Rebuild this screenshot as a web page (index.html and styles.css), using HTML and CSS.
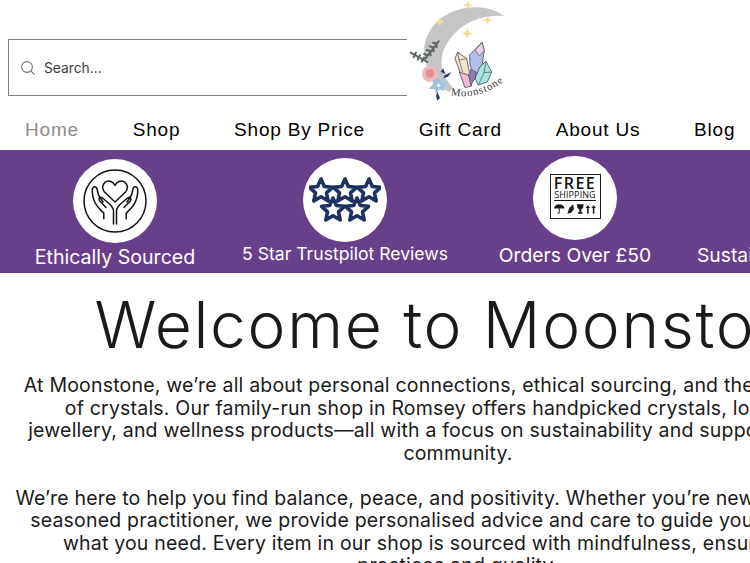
FILE: index.html
```html
<!DOCTYPE html>
<html lang="en">
<head>
<meta charset="utf-8">
<title>Moonstone</title>
<link rel="stylesheet" href="styles.css">
</head>
<body>
<div class="page">
  <header class="top">
    <form class="search">
      <svg class="search-icon" viewBox="0 0 16 16" width="16" height="16"><circle cx="7" cy="7" r="5.4" fill="none" stroke="#777" stroke-width="1.1"/><path d="M11 11l3.400 3.600" stroke="#777" stroke-width="1.100" fill="none"/></svg>
      <span class="search-text">Search...</span>
    </form>
    <svg class="logo" viewBox="21 0 339 315" width="113" height="105">
      <path d="M312 48C270 15 190 10 130 50 85 80 65 130 75 180 85 225 115 262 150 277L158 262C130 235 118 195 128 160 138 125 165 95 190 78 220 58 265 45 312 48Z" fill="#c5c5c5"/>
      <path d="M120 50l4 11 11 4-11 4-4 11-4-11-11-4 11-4ZM204 1l4 11 11 4-11 4-4 11-4-11-11-4 11-4ZM263 46l4 11 11 4-11 4-4 11-4-11-11-4 11-4ZM202 84l4 12 13 5-13 5-4 12-4-12-13-5 13-5Z" fill="#f6dd97"/>
      <g fill="none" stroke="#5d665f" stroke-width="6" stroke-linecap="round">
        <path d="M116 124L76 176M108 130l-9-2M99 142l-10-3M90 153l-10-3M81 165l-9-3M109 134l1 8M100 146l1 8M91 158l1 8"/>
        <path d="M32 158L82 186M44 165l-3 7M56 172l-3 7M68 179l-3 6M44 165l4-7M56 172l4-7M68 179l4-6"/>
      </g>
      <path d="M165 176l8-20 27 20 8 40-8 40-20-40Z" fill="#f3e3cc" stroke="#4c4c58" stroke-width="2.500"/>
      <path d="M173 156l4 24 11 36M177 180l23-4" fill="none" stroke="#4c4c58" stroke-width="2"/>
      <path d="M209 165l37-38 7 24-7 46-21 38-15-40Z" fill="#b4bdea" stroke="#4c4c58" stroke-width="2.500"/>
      <path d="M226 150l20-22 7 24-15 16Z" fill="#ead3e4" stroke="#4c4c58" stroke-width="2"/>
      <path d="M240 200l18-16 17 32-13 30-27 9-10-20Z" fill="#a8e4e0" stroke="#4c4c58" stroke-width="2.500"/>
      <path d="M258 184l-6 34 23-2M252 218l-17 37" fill="none" stroke="#4c4c58" stroke-width="2"/>
      <path d="M178 216l27 9 10 33-20 5Z" fill="#f2b9d2" stroke="#4c4c58" stroke-width="2.500"/>
      <path d="M212 208l17 8-4 20-13 20-4-24Z" fill="#8a7fa8" stroke="#4c4c58" stroke-width="2"/>
      <path d="M134 225l20-8-10 13-14 5ZM122 215l8-10 6 18ZM112 275l8 19-8 8-4-14Z" fill="#27406e"/>
      <circle cx="90" cy="222" r="24" fill="#efb8ba"/>
      <circle cx="90" cy="220" r="13" fill="#e28f96"/>
      <path d="M100 240l18-7 8 14 20-3-15 16 2 13-16-5-8 14-6-15-18 0 14-14Z" fill="#9fc2e2"/>
      <circle cx="116" cy="256" r="5" fill="#f6f6fb"/>
      <path id="arc" d="M152 285Q240 302 316 240" fill="none"/>
      <text class="logo-text"><textPath href="#arc">Moonstone</textPath></text>
    </svg>
  </header>
  <nav class="nav">
    <a class="nav-link is-active">Home</a>
    <a class="nav-link">Shop</a>
    <a class="nav-link">Shop By Price</a>
    <a class="nav-link">Gift Card</a>
    <a class="nav-link">About Us</a>
    <a class="nav-link">Blog</a>
  </nav>
  <section class="band">
    <div class="perk perk-one">
      <div class="badge">
        <svg viewBox="0 0 64 64" width="64" height="64" fill="none" stroke="#111" stroke-width="1.500" stroke-linejoin="round" stroke-linecap="round">
          <circle cx="32" cy="32" r="31"/>
          <path d="M32 33L21.500 23C17 17.500 22 10 28 12.500c2 .8 3.200 2.500 4 4 .8-1.500 2-3.200 4-4 6-2.500 11 5 6.500 10.500Z"/>
          <path d="M30.500 55V42c0-3-2-5-4-7l-7-6c-2.500-2-4.500 .5-2.800 3l6.300 6.500M20 33l-4.500-7-1.500-6c-.5-3-3.500-3-4.500-.8-.5 3 .3 9 1.800 13 2 5 6 8.500 9.500 12v5.500"/>
          <path d="M33.500 55V42c0-3 2-5 4-7l7-6c2.500-2 4.500 .5 2.800 3l-6.300 6.500M44 33l4.500-7 1.500-6c.5-3 3.500-3 4.500-.8 .5 3-.3 9-1.800 13-2 5-6 8.500-9.500 12v5.500"/>
        </svg>
      </div>
      <p class="perk-label label-one">Ethically Sourced</p>
    </div>
    <div class="perk perk-two">
      <div class="badge">
        <svg viewBox="0 0 72 46" width="72" height="46" fill="#fff" stroke="#1b3260" stroke-width="3.600" stroke-linejoin="round">
          <path d="M12 2l3.400 7.500 8.100 .9-6 5.500 1.700 8-7.200-4.100-7.200 4.100 1.700-8-6-5.500 8.100-.9Z"/>
          <path d="M60 2l3.400 7.500 8.100 .9-6 5.500 1.700 8-7.200-4.100-7.200 4.100 1.700-8-6-5.500 8.100-.9Z"/>
          <path d="M36 2l3.400 7.500 8.100 .9-6 5.500 1.700 8-7.200-4.100-7.200 4.100 1.700-8-6-5.500 8.100-.9Z"/>
          <path d="M24 21l3.400 7.500 8.100 .9-6 5.500 1.700 8-7.200-4.100-7.200 4.100 1.700-8-6-5.500 8.100-.9Z"/>
          <path d="M48 21l3.400 7.500 8.100 .9-6 5.500 1.700 8-7.200-4.100-7.200 4.100 1.700-8-6-5.500 8.100-.9Z"/>
        </svg>
      </div>
      <p class="perk-label label-two">5 Star Trustpilot Reviews</p>
    </div>
    <div class="perk perk-three">
      <div class="badge">
        <div class="ship">
          <span class="ship-free">FREE</span>
          <span class="ship-word">SHIPPING</span>
          <svg class="ship-icons" viewBox="0 0 44 10" width="44" height="10" fill="#1a1a1a">
            <path d="M0 4.500a5.500 4.500 0 0 1 11 0ZM5 4.500h1V9q0 1-1.500 1L3 9h1.500q.5 0 .5-.5Z"/>
            <path d="M14 10l2-6 4-4 1 5-3 4Z"/>
            <path d="M24 0h7l-.5 4-2 1.500V8.500h1.500V10h-5V8.500h1.500v-3l-2-1.500Z"/>
            <path d="M35.500 1l2.500 3h-1.700v6h-1.600V4H33ZM41.500 1L44 4h-1.700v6h-1.600V4H39Z"/>
          </svg>
        </div>
      </div>
      <p class="perk-label label-three">Orders Over £50</p>
    </div>
    <div class="perk perk-four">
      <div class="badge badge-off"></div>
      <p class="perk-label label-three">Sustainable Practices</p>
    </div>
  </section>
  <main class="intro">
    <h1 class="title">Welcome to Moonstone</h1>
    <p class="copy">At Moonstone, we’re all about personal connections, ethical sourcing, and the healing power<br>of crystals. Our family-run shop in Romsey offers handpicked crystals, locally made<br>jewellery, and wellness products—all with a focus on sustainability and supporting our local<br>community.</p>
    <p class="copy">We’re here to help you find balance, peace, and positivity. Whether you’re new to crystals or a<br>seasoned practitioner, we provide personalised advice and care to guide you in finding just<br>what you need. Every item in our shop is sourced with mindfulness, ensuring ethical<br>practices and quality.</p>
  </main>
</div>
</body>
</html>
```
FILE: styles.css
```css
html, body {
  margin: 0;
  padding: 0;
  height: 563px;
  overflow: hidden;
  background: #fff;
}
.page {
  width: 1000px;
  font-family: Inter, "Open Sans", sans-serif;
  color: #1a1a1a;
}
.top {
  display: flex;
  align-items: flex-start;
  height: 111px;
  padding-left: 8px;
}
.search {
  box-sizing: border-box;
  flex: none;
  width: 399px;
  height: 57px;
  margin-top: 39px;
  display: flex;
  align-items: center;
  gap: 8px;
  padding-left: 11px;
  border: 1px solid #808080;
  border-right: 0;
}
.search-text {
  font-size: 13.800px;
  color: #3b3b3b;
}
.logo { flex: none; }
.logo-text {
  font-family: "Liberation Serif", serif;
  font-size: 32px;
  fill: #333;
  letter-spacing: 3px;
}
.nav {
  box-sizing: border-box;
  display: flex;
  gap: 53.800px;
  height: 39px;
  padding: 0 0 2px 25px;
  align-items: center;
  font-family: "Liberation Sans", Arial, sans-serif;
  font-size: 19px;
  letter-spacing: .8px;
  color: #000;
}
.nav-link { white-space: nowrap; }
.is-active { color: #8d8d8d; }
.band {
  height: 123px;
  background: #68408a;
  display: flex;
  color: #fff;
}
.perk {
  flex: none;
  width: 230px;
  display: flex;
  flex-direction: column;
  align-items: center;
}
.badge {
  width: 84px;
  height: 84px;
  border-radius: 50%;
  background: #fff;
  display: flex;
  align-items: center;
  justify-content: center;
  flex: none;
}
.badge-off { background: transparent; }
.perk-one { padding-top: 9px; }
.perk-two { padding-top: 8px; }
.perk-three, .perk-four { padding-top: 6px; }
.perk-four { padding-right: 20px; box-sizing: border-box; }
.perk-label {
  margin: 0;
  white-space: nowrap;
}
.label-one { font-size: 19.600px; margin-top: 2px; }
.label-two { font-size: 17.600px; margin-top: 1px; }
.label-three { font-size: 19.300px; margin-top: 3px; }
.ship {
  box-sizing: border-box;
  width: 51px;
  height: 45px;
  margin-top: -3px;
  border: 1.500px solid #1a1a1a;
  display: flex;
  flex-direction: column;
  align-items: center;
  color: #111;
  font-family: "Open Sans", sans-serif;
  line-height: 1;
}
.ship-free {
  font-size: 16px;
  font-weight: 600;
  letter-spacing: 1.500px;
  line-height: 14px;
  margin-top: 1px;
}
.ship-word {
  font-size: 9px;
  line-height: 9px;
  letter-spacing: .1px;
  border-bottom: 1px solid #111;
  padding-bottom: 1px;
}
.ship-icons { width: 42px; margin-top: 3px; }
.intro {
  width: 916px;
  text-align: center;
}
.title {
  margin: 18px 0 0;
  padding-left: 12px;
  font-size: 64px;
  line-height: 68px;
  font-weight: 300;
  letter-spacing: 1.700px;
  white-space: nowrap;
}
.copy {
  margin: 15px 0 0;
  font-size: 19.500px;
  letter-spacing: .2px;
  line-height: 22.500px;
  white-space: nowrap;
}
.copy + .copy { margin-top: 22.500px; }
```
